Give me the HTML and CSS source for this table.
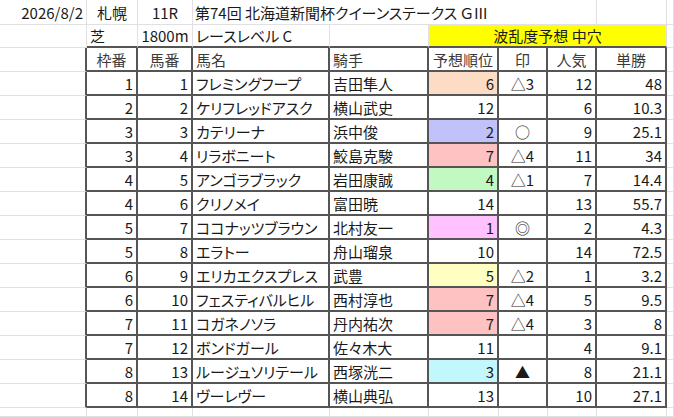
FILE: index.html
```html
<!DOCTYPE html>
<html lang="ja">
<head>
<meta charset="utf-8">
<link rel="stylesheet" href="styles.css">
</head>
<body>
<div class="sheet">
  <div class="row r1">
    <div class="cell right">2026/8/2</div>
    <div class="cell center">札幌</div>
    <div class="cell center">11R</div>
    <div class="cell title">第74回 北海道新聞杯クイーンステークス ＧⅢ</div>
    <div class="cell"></div>
    <div class="cell"></div>
  </div>
  <div class="row r2">
    <div class="cell"></div>
    <div class="cell top">芝</div>
    <div class="cell center top">1800m</div>
    <div class="cell top">レースレベル C</div>
    <div class="cell top"></div>
    <div class="cell center top band">波乱度予想 中穴</div>
    <div class="cell"></div>
  </div>
  <div class="row head">
    <div class="cell edge"></div>
    <div class="cell t center">枠番</div>
    <div class="cell t center">馬番</div>
    <div class="cell t">馬名</div>
    <div class="cell t">騎手</div>
    <div class="cell t center">予想順位</div>
    <div class="cell t center">印</div>
    <div class="cell t center">人気</div>
    <div class="cell t center">単勝</div>
    <div class="cell"></div>
  </div>

  <div class="row data"><div class="cell edge"></div><div class="cell t right">1</div><div class="cell t right">1</div><div class="cell t">フレミングフープ</div><div class="cell t">吉田隼人</div><div class="cell t right c-orange">6</div><div class="cell t center">△3</div><div class="cell t right">12</div><div class="cell t right">48</div><div class="cell"></div></div>
  <div class="row data"><div class="cell edge"></div><div class="cell t right">2</div><div class="cell t right">2</div><div class="cell t">ケリフレッドアスク</div><div class="cell t">横山武史</div><div class="cell t right">12</div><div class="cell t center"></div><div class="cell t right">6</div><div class="cell t right">10.3</div><div class="cell"></div></div>
  <div class="row data"><div class="cell edge"></div><div class="cell t right">3</div><div class="cell t right">3</div><div class="cell t">カテリーナ</div><div class="cell t">浜中俊</div><div class="cell t right c-blue">2</div><div class="cell t center">○</div><div class="cell t right">9</div><div class="cell t right">25.1</div><div class="cell"></div></div>
  <div class="row data"><div class="cell edge"></div><div class="cell t right">3</div><div class="cell t right">4</div><div class="cell t">リラボニート</div><div class="cell t">鮫島克駿</div><div class="cell t right c-pink">7</div><div class="cell t center">△4</div><div class="cell t right">11</div><div class="cell t right">34</div><div class="cell"></div></div>
  <div class="row data"><div class="cell edge"></div><div class="cell t right">4</div><div class="cell t right">5</div><div class="cell t">アンゴラブラック</div><div class="cell t">岩田康誠</div><div class="cell t right c-green">4</div><div class="cell t center">△1</div><div class="cell t right">7</div><div class="cell t right">14.4</div><div class="cell"></div></div>
  <div class="row data"><div class="cell edge"></div><div class="cell t right">4</div><div class="cell t right">6</div><div class="cell t">クリノメイ</div><div class="cell t">富田暁</div><div class="cell t right">14</div><div class="cell t center"></div><div class="cell t right">13</div><div class="cell t right">55.7</div><div class="cell"></div></div>
  <div class="row data"><div class="cell edge"></div><div class="cell t right">5</div><div class="cell t right">7</div><div class="cell t">ココナッツブラウン</div><div class="cell t">北村友一</div><div class="cell t right c-magenta">1</div><div class="cell t center">◎</div><div class="cell t right">2</div><div class="cell t right">4.3</div><div class="cell"></div></div>
  <div class="row data"><div class="cell edge"></div><div class="cell t right">5</div><div class="cell t right">8</div><div class="cell t">エラトー</div><div class="cell t">舟山瑠泉</div><div class="cell t right">10</div><div class="cell t center"></div><div class="cell t right">14</div><div class="cell t right">72.5</div><div class="cell"></div></div>
  <div class="row data"><div class="cell edge"></div><div class="cell t right">6</div><div class="cell t right">9</div><div class="cell t">エリカエクスプレス</div><div class="cell t">武豊</div><div class="cell t right c-yellow">5</div><div class="cell t center">△2</div><div class="cell t right">1</div><div class="cell t right">3.2</div><div class="cell"></div></div>
  <div class="row data"><div class="cell edge"></div><div class="cell t right">6</div><div class="cell t right">10</div><div class="cell t">フェスティバルヒル</div><div class="cell t">西村淳也</div><div class="cell t right c-pink">7</div><div class="cell t center">△4</div><div class="cell t right">5</div><div class="cell t right">9.5</div><div class="cell"></div></div>
  <div class="row data"><div class="cell edge"></div><div class="cell t right">7</div><div class="cell t right">11</div><div class="cell t">コガネノソラ</div><div class="cell t">丹内祐次</div><div class="cell t right c-pink">7</div><div class="cell t center">△4</div><div class="cell t right">3</div><div class="cell t right">8</div><div class="cell"></div></div>
  <div class="row data"><div class="cell edge"></div><div class="cell t right">7</div><div class="cell t right">12</div><div class="cell t">ボンドガール</div><div class="cell t">佐々木大</div><div class="cell t right">11</div><div class="cell t center"></div><div class="cell t right">4</div><div class="cell t right">9.1</div><div class="cell"></div></div>
  <div class="row data"><div class="cell edge"></div><div class="cell t right">8</div><div class="cell t right">13</div><div class="cell t">ルージュソリテール</div><div class="cell t">西塚洸二</div><div class="cell t right c-cyan">3</div><div class="cell t center">▲</div><div class="cell t right">8</div><div class="cell t right">21.1</div><div class="cell"></div></div>
  <div class="row data"><div class="cell edge"></div><div class="cell t right">8</div><div class="cell t right">14</div><div class="cell t">ヴーレヴー</div><div class="cell t">横山典弘</div><div class="cell t right">13</div><div class="cell t center"></div><div class="cell t right">10</div><div class="cell t right">27.1</div><div class="cell"></div></div>

  <div class="row tail">
    <div class="cell"></div><div class="cell"></div><div class="cell"></div><div class="cell"></div><div class="cell"></div><div class="cell"></div><div class="cell"></div><div class="cell"></div><div class="cell"></div><div class="cell"></div>
  </div>
</div>
</body>
</html>
```

FILE: styles.css
```css
html, body {
  margin: 0;
  padding: 0;
  background: #ffffff;
}

.sheet {
  width: 674px;
  height: 417px;
  overflow: hidden;
  font-family: "Noto Sans CJK JP", "Noto Sans", sans-serif;
  font-size: 15px;
  font-feature-settings: "palt";
  color: #1a1a1a;
}

.row {
  display: grid;
  grid-template-columns: 87px 51px 55px 137px 99px 70px 49px 49px 70px 1fr;
  height: 24px;
}

.r1 {
  height: 25px;
  grid-template-columns: 87px 51px 55px 404px 70px 1fr;
}

.r2 {
  height: 23px;
  grid-template-columns: 87px 51px 55px 137px 99px 238px 1fr;
}

.tail {
  height: 9px;
}

.cell {
  box-sizing: border-box;
  display: flex;
  align-items: center;
  padding: 0 3px;
  white-space: nowrap;
  overflow: hidden;
  border-right: 1px solid #e1e1e1;
  border-bottom: 1px solid #e1e1e1;
  line-height: 1;
}

.right { justify-content: flex-end; }
.center { justify-content: center; }

.title { padding-left: 2px; }

.top { border-bottom: 2px solid #555555; }

.band {
  background: #ffff00;
  border-right-color: #e1e1e1;
}

.edge { border-right: 2px solid #555555; }

.t {
  border-right: 2px solid #555555;
  border-bottom: 2px solid #555555;
}

.head .cell.t { color: #3a3a3a; }

.c-orange { background: #fcdcc4; }
.c-blue { background: #c2c2fa; }
.c-pink { background: #ffc2c2; }
.c-green { background: #c2f8c2; }
.c-magenta { background: #ffc2ff; }
.c-yellow { background: #ffffc2; }
.c-cyan { background: #c2f8fc; }
```
